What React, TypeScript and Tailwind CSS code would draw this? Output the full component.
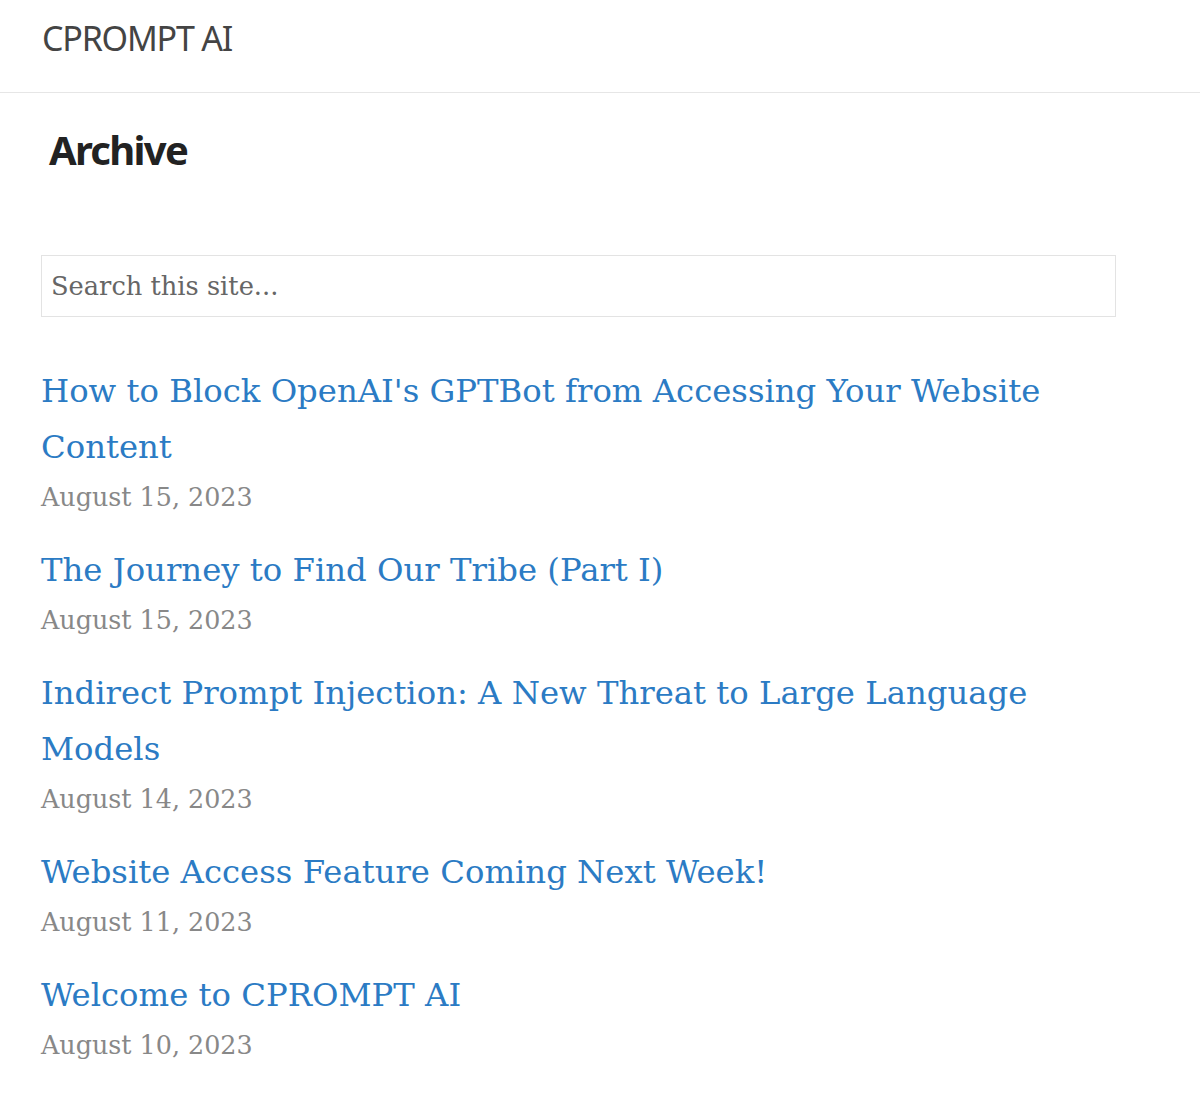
const posts = [
  { title: "How to Block OpenAI's GPTBot from Accessing Your Website Content", date: 'August 15, 2023' },
  { title: 'The Journey to Find Our Tribe (Part I)', date: 'August 15, 2023' },
  { title: 'Indirect Prompt Injection: A New Threat to Large Language Models', date: 'August 14, 2023' },
  { title: 'Website Access Feature Coming Next Week!', date: 'August 11, 2023' },
  { title: 'Welcome to CPROMPT AI', date: 'August 10, 2023' },
]

export default function App() {
  return (
    <div className="min-h-screen bg-white">
      <header className="h-[93px] border-b border-[#e6e6e6] px-[42px] pt-[13px]">
        <a href="#" className="text-[34px] leading-[50px] tracking-[-1.2px] text-[#444] font-['Noto_Sans',sans-serif]">
          CPROMPT AI
        </a>
      </header>

      <main className="px-[41px] w-[1157px]">
        <h1 className="pl-[8px] pt-[27px] text-[40px] leading-[60px] font-bold text-[#222] font-['Noto_Sans',sans-serif] tracking-[-1.7px]">
          Archive
        </h1>

        <div className="mt-[75px]">
          <input
            type="text"
            placeholder="Search this site..."
            className="w-full h-[62px] border border-[#e3e3e3] px-[9px] text-[25.7px] text-[#666] placeholder-[#666] font-['DejaVu_Serif',serif] outline-none"
          />
        </div>

        <ul className="mt-[46px] w-[1075px]">
          {posts.map((post) => (
            <li key={post.title} className="mb-[23px]">
              <a
                href="#"
                className="block text-[32.3px] leading-[56px] text-[#2b7bc4] font-['DejaVu_Serif',serif]"
              >
                {post.title}
              </a>
              <p className="text-[25.4px] leading-[44px] text-[#888] font-['DejaVu_Serif',serif]">{post.date}</p>
            </li>
          ))}
        </ul>
      </main>
    </div>
  )
}
